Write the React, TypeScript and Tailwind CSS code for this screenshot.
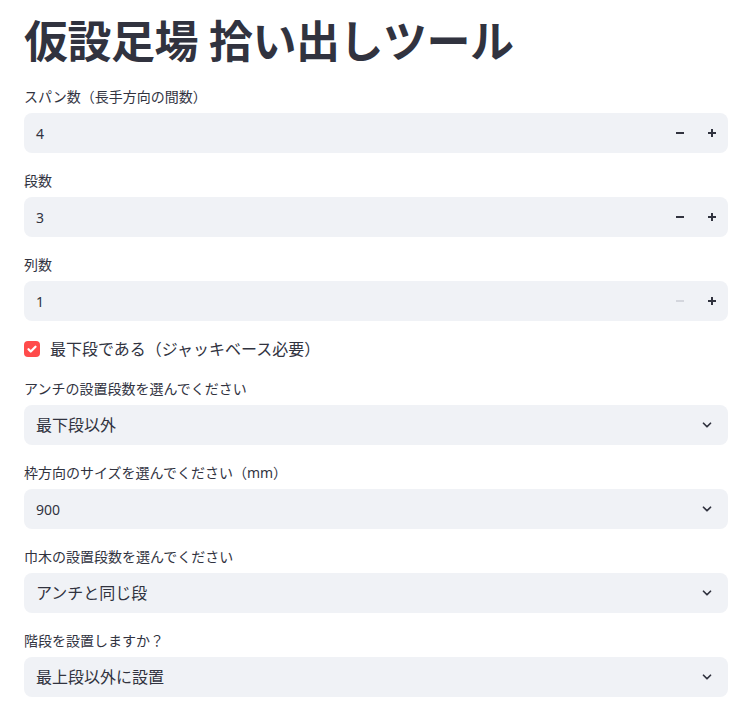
import React from "react";

const font = { fontFamily: '"Source Sans Pro", "Noto Sans", "Noto Sans CJK JP", sans-serif' };

function Minus({ disabled }: { disabled?: boolean }) {
  return (
    <svg width="10" height="10" viewBox="0 0 10 10">
      <rect x="1" y="4" width="8" height="2" fill={disabled ? "#d4d6dd" : "#31333f"} />
    </svg>
  );
}
function Plus() {
  return (
    <svg width="10" height="10" viewBox="0 0 10 10">
      <rect x="1" y="4" width="8" height="2" fill="#31333f" />
      <rect x="4" y="1" width="2" height="8" fill="#31333f" />
    </svg>
  );
}
function Chevron() {
  return (
    <svg width="14" height="14" viewBox="0 0 24 24" fill="none" stroke="#31333f" strokeWidth="3" strokeLinecap="round" strokeLinejoin="round">
      <path d="M6 9l6 6 6-6" />
    </svg>
  );
}

function Label({ children }: { children: React.ReactNode }) {
  return <div className="h-6 mb-1 flex items-center text-[14px] leading-6 text-[#31333f]">{children}</div>;
}

function NumberField({ label, value, minusDisabled }: { label: string; value: string; minusDisabled?: boolean }) {
  return (
    <div>
      <Label>{label}</Label>
      <div className="h-10 rounded-lg bg-[#f0f2f6] flex items-center">
        <div className="flex-1 pl-3 text-[14px] text-[#31333f]">{value}</div>
        <div className="w-8 h-10 flex items-center justify-center"><Minus disabled={minusDisabled} /></div>
        <div className="w-8 h-10 flex items-center justify-center"><Plus /></div>
      </div>
    </div>
  );
}

function SelectField({ label, value, numeric }: { label: string; value: string; numeric?: boolean }) {
  return (
    <div>
      <Label>{label}</Label>
      <div className="h-10 rounded-lg bg-[#f0f2f6] flex items-center">
        <div className={numeric ? "flex-1 pl-3 text-[14px] text-[#31333f]" : "flex-1 pl-3 text-[16px] text-[#31333f]"}>{value}</div>
        <div className="pr-[14px] flex items-center"><Chevron /></div>
      </div>
    </div>
  );
}

export default function App() {
  return (
    <div className="w-[752px] h-[712px] bg-white overflow-hidden" style={font}>
      <div className="px-6">
        <h1 className="pt-[15px] pb-[18px] text-[44px] leading-[52px] font-bold text-[#31333f] tracking-[-0.5px]">
          仮設足場 拾い出しツール
        </h1>
        <div className="flex flex-col gap-4">
          <NumberField label="スパン数（長手方向の間数）" value="4" />
          <NumberField label="段数" value="3" />
          <NumberField label="列数" value="1" minusDisabled />
          <div className="flex items-center gap-[10px] h-6">
            <div className="w-4 h-4 rounded bg-[#ff4b4b] flex items-center justify-center">
              <svg width="12" height="12" viewBox="0 0 24 24" fill="none" stroke="white" strokeWidth="4.5" strokeLinecap="round" strokeLinejoin="round">
                <path d="M5 12.5l4.5 4.5L19 7.5" />
              </svg>
            </div>
            <span className="text-[16px] text-[#31333f]">最下段である（ジャッキベース必要）</span>
          </div>
          <SelectField label="アンチの設置段数を選んでください" value="最下段以外" />
          <SelectField label="枠方向のサイズを選んでください（mm）" value="900" numeric />
          <SelectField label="巾木の設置段数を選んでください" value="アンチと同じ段" />
          <SelectField label="階段を設置しますか？" value="最上段以外に設置" />
        </div>
      </div>
    </div>
  );
}
